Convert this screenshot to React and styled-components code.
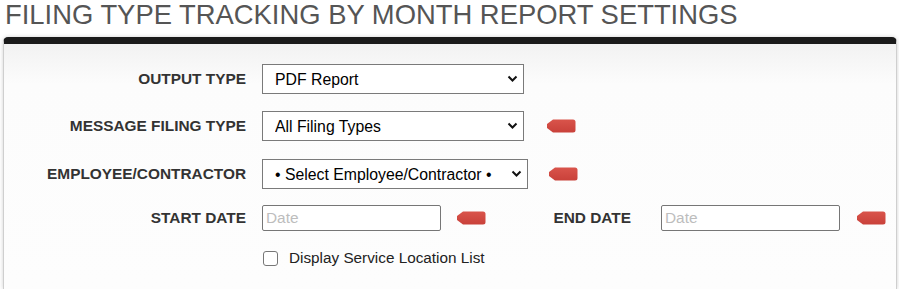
import React from 'react';
import styled, { createGlobalStyle } from 'styled-components';

const GlobalStyle = createGlobalStyle`
  html, body {
    margin: 0;
    padding: 0;
    background: #fff;
    font-family: "Liberation Sans", Arial, sans-serif;
  }
`;

const Page = styled.div`
  padding: 0 2px 0 3px;
  height: 289px;
  box-sizing: border-box;
  display: flex;
  flex-direction: column;
  overflow: hidden;
`;

const Title = styled.h1`
  margin: 0;
  padding-left: 2px;
  font-size: 27.4px;
  line-height: 30px;
  font-weight: normal;
  color: #555;
  white-space: nowrap;
`;

const Panel = styled.div`
  margin-top: 7px;
  flex: 1;
  border-top: 7px solid #1b1b1b;
  border-left: 1px solid #cfcfcf;
  border-right: 1px solid #cfcfcf;
  border-radius: 5px 5px 0 0;
  background: linear-gradient(#f2f2f2, #fcfcfc 40px, #fdfdfd);
  box-shadow: 0 0 4px rgba(0, 0, 0, 0.18);
  padding-top: 20px;
  display: flex;
  flex-direction: column;
`;

const Row = styled.div`
  display: flex;
  align-items: center;
  margin-bottom: ${(p) => p.$gap || 0}px;
`;

const Label = styled.label`
  width: ${(p) => p.$width || 242}px;
  flex: none;
  text-align: right;
  font-size: 15.4px;
  font-weight: bold;
  color: #333;
  margin-right: ${(p) => p.$space || 16}px;
  white-space: nowrap;
`;

const SelectWrap = styled.div`
  position: relative;
  width: ${(p) => p.$width}px;
  height: 30px;
  flex: none;
`;

const Select = styled.select`
  appearance: none;
  -webkit-appearance: none;
  width: 100%;
  height: 100%;
  box-sizing: border-box;
  border: 1px solid #7a7a7a;
  border-radius: 0;
  background: #fff;
  padding: 0 28px 0 12px;
  font-family: "Liberation Sans", Arial, sans-serif;
  font-size: 15.8px;
  color: #000;
  outline: none;
`;

const Chevron = styled.svg`
  position: absolute;
  right: 6px;
  top: 50%;
  transform: translateY(-50%);
  pointer-events: none;
`;

const DateInput = styled.input`
  width: 179px;
  height: 26px;
  box-sizing: border-box;
  border: 1px solid #767676;
  border-radius: 2px;
  padding: 0 3px;
  font-family: "Liberation Sans", Arial, sans-serif;
  font-size: 15.4px;
  background: #fff;
  outline: none;
  &::placeholder {
    color: #bdbdbd;
  }
`;

const Tag = styled.svg`
  flex: none;
  margin-left: ${(p) => p.$offset}px;
`;

const CheckRow = styled.label`
  display: flex;
  align-items: center;
  margin-left: 259px;
  margin-top: 18px;
  font-size: 15.3px;
  color: #222;
`;

const Box = styled.span`
  width: 13px;
  height: 13px;
  border: 1px solid #777;
  border-radius: 3px;
  background: #fff;
  margin-right: 11px;
`;

const Required = ({ offset }) => (
  <Tag $offset={offset} width="30" height="14" viewBox="0 0 30 14">
    <defs>
      <linearGradient id="tagfill" x1="0" y1="0" x2="0" y2="1">
        <stop offset="0" stopColor="#d9544b" />
        <stop offset="1" stopColor="#c9413a" />
      </linearGradient>
    </defs>
    <path d="M7 0.5 H27 Q29.5 0.5 29.5 3 V11 Q29.5 13.5 27 13.5 H7 L1 9 V5 Z" fill="url(#tagfill)" />
  </Tag>
);

const Dropdown = ({ width, value }) => (
  <SelectWrap $width={width}>
    <Select defaultValue={value}>
      <option>{value}</option>
    </Select>
    <Chevron width="11" height="8" viewBox="0 0 11 8">
      <polyline points="1.5,1.5 5.5,5.5 9.5,1.5" fill="none" stroke="#111" strokeWidth="2" />
    </Chevron>
  </SelectWrap>
);

export default function App() {
  return (
    <Page>
      <GlobalStyle />
      <Title>FILING TYPE TRACKING BY MONTH REPORT SETTINGS</Title>
      <Panel>
        <Row $gap={17}>
          <Label>OUTPUT TYPE</Label>
          <Dropdown width={262} value="PDF Report" />
        </Row>
        <Row $gap={18}>
          <Label>MESSAGE FILING TYPE</Label>
          <Dropdown width={262} value="All Filing Types" />
          <Required offset={22} />
        </Row>
        <Row $gap={16}>
          <Label>EMPLOYEE/CONTRACTOR</Label>
          <Dropdown width={266} value="• Select Employee/Contractor •" />
          <Required offset={20} />
        </Row>
        <Row>
          <Label>START DATE</Label>
          <DateInput placeholder="Date" />
          <Required offset={15} />
          <Label $width={145} $space={30}>END DATE</Label>
          <DateInput placeholder="Date" />
          <Required offset={16} />
        </Row>
        <CheckRow>
          <Box />
          Display Service Location List
        </CheckRow>
      </Panel>
    </Page>
  );
}
